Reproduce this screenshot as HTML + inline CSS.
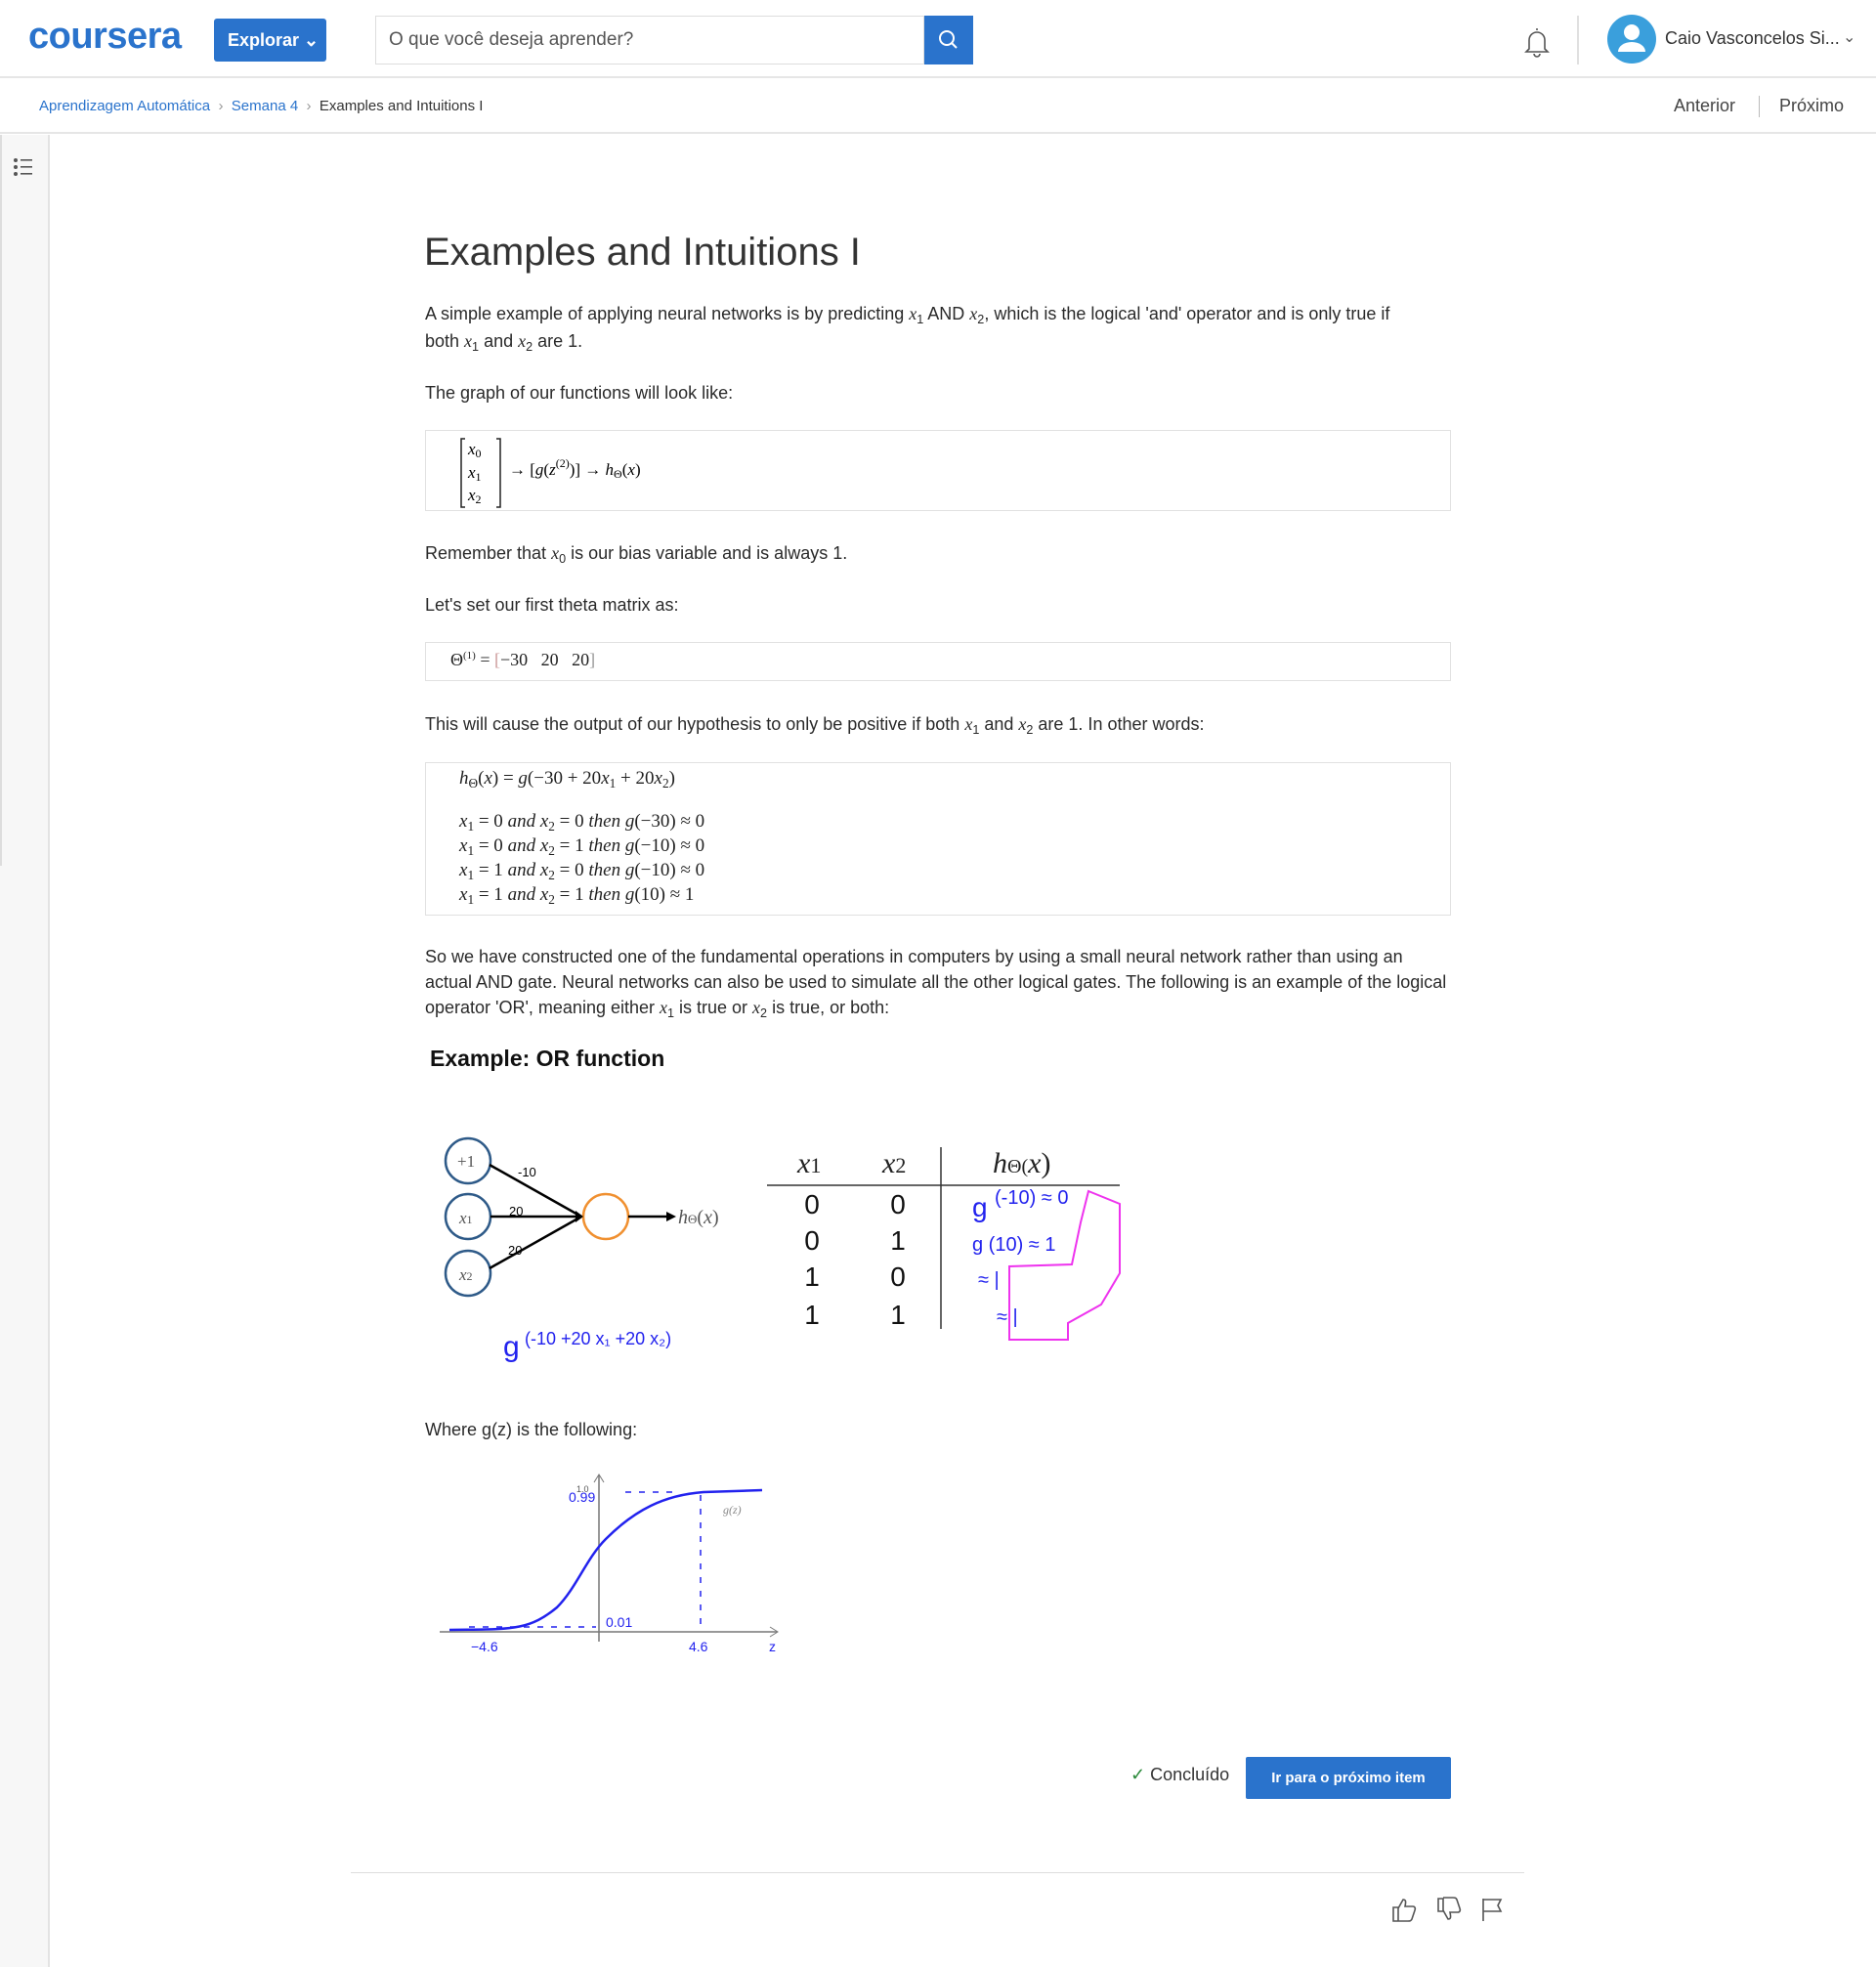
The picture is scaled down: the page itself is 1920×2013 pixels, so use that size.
<!DOCTYPE html>
<html><head><meta charset="utf-8"><style>
*{margin:0;padding:0;box-sizing:border-box}
body{width:1920px;height:2013px;background:#fff;font-family:"Liberation Sans",sans-serif;color:#1f1f1f;position:relative;overflow:hidden}
.abs{position:absolute}
.p{position:absolute;left:435px;font-size:18px;line-height:28px;color:#2a2a2a;width:1050px}
.box{position:absolute;left:435px;width:1050px;border:1px solid #e1e1e1;background:#fff}
.m{font-family:"Liberation Serif",serif;font-style:italic}
.r{font-family:"Liberation Serif",serif}
sub{font-size:70%;vertical-align:-0.3em;line-height:0}
sup{line-height:0}
.ml{position:absolute;left:34px;font-size:19px;font-family:"Liberation Serif",serif;white-space:nowrap}
</style></head><body>
<!-- header -->
<div class="abs" style="left:0;top:0;width:1920px;height:80px;border-bottom:2px solid #e6e6e6"></div>
<div class="abs" style="left:29px;top:16px;font-size:38px;font-weight:bold;color:#2a73cc;letter-spacing:-0.5px">coursera</div>
<div class="abs" style="left:219px;top:19px;width:115px;height:44px;background:#2a73cc;border-radius:3px;color:#fff;font-weight:bold;font-size:18px;line-height:44px;padding-left:14px">Explorar ⌄</div>
<div class="abs" style="left:384px;top:16px;width:562px;height:50px;border:1px solid #ddd;font-size:19px;color:#555;line-height:48px;padding-left:13px">O que você deseja aprender?</div>
<div class="abs" style="left:946px;top:16px;width:50px;height:50px;background:#2a73cc"><svg width="50" height="50"><circle cx="23" cy="23" r="7" stroke="#fff" stroke-width="2" fill="none"/><line x1="28" y1="28" x2="33" y2="33" stroke="#fff" stroke-width="2"/></svg></div>
<svg class="abs" style="left:1558px;top:26px" width="30" height="34"><path d="M15 3v2M7 24V15a8 8 0 0 1 16 0v9l3 3H4z" stroke="#555" stroke-width="1.6" fill="none"/><path d="M12 29a3 3 0 0 0 6 0" stroke="#555" stroke-width="1.6" fill="none"/></svg>
<div class="abs" style="left:1614px;top:16px;width:2px;height:50px;background:#e0e0e0"></div>
<svg class="abs" style="left:1645px;top:15px" width="50" height="50"><circle cx="25" cy="25" r="25" fill="#3a9fdc"/><circle cx="25" cy="18" r="8" fill="#fff"/><path d="M11 38a14 10 0 0 1 28 0z" fill="#fff"/></svg>
<div class="abs" style="left:1704px;top:29px;font-size:18px;color:#333">Caio Vasconcelos Si...</div>
<div class="abs" style="left:1886px;top:28px;font-size:16px;color:#555">⌄</div>
<!-- breadcrumb -->
<div class="abs" style="left:0;top:80px;width:1920px;height:57px;border-bottom:2px solid #e6e6e6"></div>
<div class="abs" style="left:40px;top:100px;font-size:15px;color:#2a73cc">Aprendizagem Automática <span style="color:#999">&nbsp;›&nbsp;</span> Semana 4 <span style="color:#999">&nbsp;›&nbsp;</span> <span style="color:#333">Examples and Intuitions I</span></div>
<div class="abs" style="left:1713px;top:98px;font-size:18px;color:#444">Anterior</div>
<div class="abs" style="left:1800px;top:98px;width:1px;height:22px;background:#bbb"></div>
<div class="abs" style="left:1821px;top:98px;font-size:18px;color:#444">Próximo</div>
<!-- sidebar -->
<div class="abs" style="left:0;top:138px;width:51px;height:1875px;background:#f7f7f7;border-right:2px solid #e3e3e3"></div>
<div class="abs" style="left:0;top:138px;width:2px;height:748px;background:#ddd"></div>
<svg class="abs" style="left:13px;top:161px" width="22" height="20"><g fill="#555"><circle cx="3" cy="3" r="2"/><circle cx="3" cy="10" r="2"/><circle cx="3" cy="17" r="2"/><rect x="8" y="2" width="12" height="1.6"/><rect x="8" y="9" width="12" height="1.6"/><rect x="8" y="16" width="12" height="1.6"/></g></svg>
<!-- content -->
<div class="abs" style="left:434px;top:236px;font-size:40px;color:#333">Examples and Intuitions I</div>
<div class="p" style="top:307px;width:1015px">A simple example of applying neural networks is by predicting <span class="m">x</span><sub>1</sub> AND <span class="m">x</span><sub>2</sub>, which is the logical 'and' operator and is only true if both <span class="m">x</span><sub>1</sub> and <span class="m">x</span><sub>2</sub> are 1.</div>
<div class="p" style="top:388px">The graph of our functions will look like:</div>
<div class="box" style="top:440px;height:83px">
<svg width="400" height="80" style="position:absolute;left:30px;top:0"><g font-family="Liberation Serif" font-size="17"><path d="M10 8h-4v70h4M42 8h4v70h-4" stroke="#222" stroke-width="1.5" fill="none"/><text x="13" y="24" font-style="italic">x<tspan font-size="12" font-style="normal" dy="3">0</tspan></text><text x="13" y="48" font-style="italic">x<tspan font-size="12" font-style="normal" dy="3">1</tspan></text><text x="13" y="71" font-style="italic">x<tspan font-size="12" font-style="normal" dy="3">2</tspan></text><text x="55" y="45">→ [<tspan font-style="italic">g</tspan>(<tspan font-style="italic">z</tspan><tspan font-size="12" dy="-8">(2)</tspan><tspan dy="8">)] → </tspan><tspan font-style="italic">h</tspan><tspan font-size="12" dy="3">Θ</tspan><tspan dy="-3">(</tspan><tspan font-style="italic">x</tspan>)</text></g></svg>
</div>
<div class="p" style="top:552px">Remember that <span class="m">x</span><sub>0</sub> is our bias variable and is always 1.</div>
<div class="p" style="top:605px">Let's set our first theta matrix as:</div>
<div class="box" style="top:657px;height:40px"><div class="r" style="position:absolute;left:25px;top:7px;font-size:18px">Θ<sup style="font-size:11px">(1)</sup> = <span style="color:#c99">[</span>−30 &nbsp; 20 &nbsp; 20<span style="color:#999">]</span></div></div>
<div class="p" style="top:727px">This will cause the output of our hypothesis to only be positive if both <span class="m">x</span><sub>1</sub> and <span class="m">x</span><sub>2</sub> are 1. In other words:</div>
<div class="box" style="top:780px;height:157px">
<div class="ml" style="top:5px"><i>h</i><sub>Θ</sub>(<i>x</i>) = <i>g</i>(−30 + 20<i>x</i><sub>1</sub> + 20<i>x</i><sub>2</sub>)</div>
<div class="ml" style="top:49px"><i>x</i><sub>1</sub> = 0 <i>and x</i><sub>2</sub> = 0 <i>then g</i>(−30) ≈ 0</div>
<div class="ml" style="top:74px"><i>x</i><sub>1</sub> = 0 <i>and x</i><sub>2</sub> = 1 <i>then g</i>(−10) ≈ 0</div>
<div class="ml" style="top:99px"><i>x</i><sub>1</sub> = 1 <i>and x</i><sub>2</sub> = 0 <i>then g</i>(−10) ≈ 0</div>
<div class="ml" style="top:124px"><i>x</i><sub>1</sub> = 1 <i>and x</i><sub>2</sub> = 1 <i>then g</i>(10) ≈ 1</div>
</div>
<div class="p" style="top:966px;line-height:26px">So we have constructed one of the fundamental operations in computers by using a small neural network rather than using an actual AND gate. Neural networks can also be used to simulate all the other logical gates. The following is an example of the logical operator 'OR', meaning either <span class="m">x</span><sub>1</sub> is true or <span class="m">x</span><sub>2</sub> is true, or both:</div>
<!-- OR image -->
<div class="abs" style="left:440px;top:1070px;font-size:23px;font-weight:bold;color:#111">Example: OR function</div>
<svg class="abs" style="left:420px;top:1060px" width="760" height="360">
<g fill="none" stroke-width="2.5" stroke="#2e5a88"><circle cx="59" cy="128" r="23"/><circle cx="59" cy="185" r="23"/><circle cx="59" cy="243" r="23"/></g>
<circle cx="200" cy="185" r="23" fill="none" stroke="#f09030" stroke-width="2.5"/>
<g stroke="#000" stroke-width="2.5"><line x1="81" y1="132" x2="175" y2="185"/><line x1="82" y1="185" x2="175" y2="185"/><line x1="81" y1="238" x2="175" y2="185"/><line x1="223" y1="185" x2="262" y2="185"/></g>
<path d="M262 180l10 5-10 5z M169 179l8 6-8 6z"/>
<g font-family="Liberation Serif" font-size="17" fill="#555"><text x="48" y="134">+1</text><text x="50" y="192" font-style="italic">x<tspan font-size="12" font-style="normal">1</tspan></text><text x="50" y="250" font-style="italic">x<tspan font-size="12" font-style="normal">2</tspan></text><text x="274" y="192" font-style="italic" font-size="20">h<tspan font-size="13" font-style="normal">Θ</tspan><tspan font-style="normal">(</tspan>x<tspan font-style="normal">)</tspan></text></g>
<g font-size="13" font-family="Liberation Sans"><text x="110" y="144">-10</text><text x="101" y="184">20</text><text x="100" y="224">20</text></g>
<g font-family="Liberation Serif" font-size="30" font-style="italic" fill="#222"><text x="396" y="140">x<tspan font-size="22" font-style="normal">1</tspan></text><text x="483" y="140">x<tspan font-size="22" font-style="normal">2</tspan></text><text x="596" y="140">h<tspan font-size="20" font-style="normal">Θ(</tspan>x<tspan font-style="normal">)</tspan></text></g>
<line x1="365" y1="153" x2="726" y2="153" stroke="#333" stroke-width="1.5"/>
<line x1="543" y1="114" x2="543" y2="300" stroke="#333" stroke-width="1.5"/>
<g font-family="Liberation Sans" font-size="28" fill="#111" text-anchor="middle"><text x="411" y="182">0</text><text x="499" y="182">0</text><text x="411" y="219">0</text><text x="499" y="219">1</text><text x="411" y="256">1</text><text x="499" y="256">0</text><text x="411" y="295">1</text><text x="499" y="295">1</text></g>
<g fill="#2222ee" font-family="Liberation Sans" font-size="20"><text x="575" y="185" font-size="28">g</text><text x="598" y="172">(-10) ≈ 0</text><text x="575" y="220">g (10) ≈ 1</text><text x="581" y="256">≈ |</text><text x="600" y="294">≈ |</text><text x="95" y="328" font-size="30">g</text><text x="117" y="316" font-size="18">(-10  +20 x₁  +20 x₂)</text></g>
<path d="M694 159L726 172L726 243L707 275L673 294L673 311L613 311L613 236L677 234L686 191Z" fill="none" stroke="#ee33ee" stroke-width="2"/>
</svg>
<div class="p" style="top:1449px">Where g(z) is the following:</div>
<svg class="abs" style="left:430px;top:1505px" width="380" height="200">
<line x1="20" y1="165" x2="365" y2="165" stroke="#777" stroke-width="1.5"/><path d="M358 160l8 5-8 5" fill="none" stroke="#777"/>
<line x1="183" y1="175" x2="183" y2="5" stroke="#777" stroke-width="1.5"/><path d="M178 12l5-8 5 8" fill="none" stroke="#777"/>
<path d="M30 163 C90 162 110 165 140 140 C160 120 170 90 190 70 C220 40 250 25 290 22 L350 20" fill="none" stroke="#2222ee" stroke-width="2.5"/>
<g stroke="#2222ee" stroke-dasharray="6 8" stroke-width="1.5"><line x1="50" y1="160" x2="180" y2="160"/><line x1="210" y1="22" x2="260" y2="22"/><line x1="287" y1="25" x2="287" y2="165"/></g>
<g font-family="Liberation Sans" fill="#2222ee" font-size="14"><text x="52" y="185">−4.6</text><text x="275" y="185">4.6</text><text x="357" y="185">z</text><text x="190" y="160">0.01</text><text x="152" y="32">0.99</text></g>
<text x="160" y="22" font-size="9" fill="#555">1.0</text><text x="310" y="44" font-size="12" fill="#888" font-family="Liberation Serif" font-style="italic">g(z)</text>
</svg>
<!-- bottom -->
<div class="abs" style="left:1157px;top:1806px;font-size:18px;color:#333"><span style="color:#2a8a3a">✓</span> Concluído</div>
<div class="abs" style="left:1275px;top:1798px;width:210px;height:43px;background:#2a73cc;color:#fff;font-size:15px;font-weight:bold;text-align:center;line-height:43px;border-radius:2px">Ir para o próximo item</div>
<div class="abs" style="left:359px;top:1916px;width:1201px;height:1px;background:#ddd"></div>
<svg class="abs" style="left:1423px;top:1940px" width="120" height="30"><g fill="none" stroke="#555" stroke-width="1.6"><path d="M3 12h5v14H3zM8 13l5-9c3 0 3 2 2 7h8c2 0 3 2 2 4l-3 9c-1 2-2 2-4 2H8"/><path d="M49 16h5V3h-5zM54 15l5 9c3 0 3-2 2-7h8c2 0 3-2 2-4l-3-9c-1-2-2-2-4-2H54"/><path d="M95 26V3M95 4h18l-3 6 3 6H95"/></g></svg>
</body></html>
